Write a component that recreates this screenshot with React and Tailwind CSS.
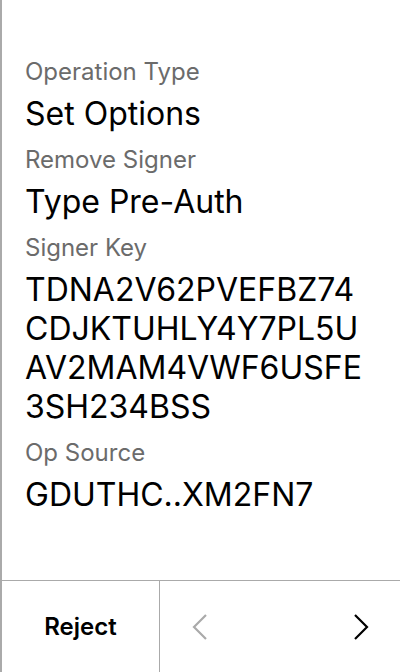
const font = { fontFamily: "Inter, 'Noto Sans', sans-serif" };

function Field({ label, children }) {
  return (
    <div>
      <div className="text-[24px] leading-[29px] mb-[8px] text-[#6b6b6b]">{label}</div>
      <div className="text-[32px] leading-[39px] text-black">{children}</div>
    </div>
  );
}

export default function App() {
  return (
    <div style={font} className="w-[400px] h-[672px] bg-white border-l-2 border-[#aaa] flex flex-col">
      <div className="flex-1 px-[23px] pt-[57px] flex flex-col gap-[12px]">
        <Field label="Operation Type">Set Options</Field>
        <Field label="Remove Signer">Type Pre-Auth</Field>
        <Field label="Signer Key">
          TDNA2V62PVEFBZ74<br />CDJKTUHLY4Y7PL5U<br />AV2MAM4VWF6USFE<br />3SH234BSS
        </Field>
        <Field label="Op Source">GDUTHC..XM2FN7</Field>
      </div>
      <div className="h-[92px] border-t border-[#aaa] flex">
        <button className="w-[158px] border-r border-[#aaa] text-[24px] font-semibold text-black">Reject</button>
        <div className="flex-1 flex items-center justify-between pl-[32px] pr-[31px]">
          <svg width="16" height="26" viewBox="0 0 16 26" fill="none" stroke="#aaa" strokeWidth="2.2">
            <path d="M14 1 L2 13 L14 25" />
          </svg>
          <svg width="16" height="26" viewBox="0 0 16 26" fill="none" stroke="#000" strokeWidth="2.2">
            <path d="M2 1 L14 13 L2 25" />
          </svg>
        </div>
      </div>
    </div>
  );
}
